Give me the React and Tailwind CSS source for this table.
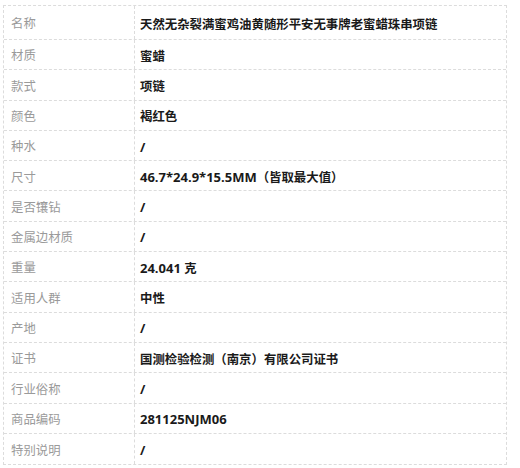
const rows = [
  ['名称', '天然无杂裂满蜜鸡油黄随形平安无事牌老蜜蜡珠串项链'],
  ['材质', '蜜蜡'],
  ['款式', '项链'],
  ['颜色', '褐红色'],
  ['种水', '/'],
  ['尺寸', '46.7*24.9*15.5MM（皆取最大值）'],
  ['是否镶钻', '/'],
  ['金属边材质', '/'],
  ['重量', '24.041 克'],
  ['适用人群', '中性'],
  ['产地', '/'],
  ['证书', '国测检验检测（南京）有限公司证书'],
  ['行业俗称', '/'],
  ['商品编码', '281125NJM06'],
  ['特别说明', '/'],
];

// CJK runs are set a little smaller than the latin ones
const Mixed = ({ text }) =>
  text.split(/([\u3000-\u9fff\uff00-\uffef]+)/).map((part, i) =>
    /[\u3000-\u9fff\uff00-\uffef]/.test(part) ? (
      <span key={i} className="text-[12.4px]">{part}</span>
    ) : (
      <span key={i} className="text-[13px]">{part}</span>
    )
  );

export default function App() {
  return (
    <div
      className="w-[520px] h-[468px] bg-white pt-[5px] pl-[3px]"
      style={{ fontFamily: '"Open Sans", "Noto Sans CJK SC", sans-serif' }}
    >
      <div className="w-[504px] border border-dashed border-[#dcdcdc]">
        {rows.map(([label, value], i) => (
          <div
            key={label}
            className={
              'flex ' +
              (i === 0 ? 'h-[34px] ' : 'h-[30.3px] ') +
              (i < rows.length - 1 ? 'border-b border-dashed border-[#dcdcdc]' : '')
            }
          >
            <div className="w-[131px] shrink-0 flex items-center pl-[7px] pt-[4px] text-[12.4px] text-[#9a9a9a] border-r border-dashed border-[#dcdcdc]">
              {label}
            </div>
            <div className="flex-1 flex items-center pl-[5px] font-bold text-[#1a1a1a]">
              <span>
                <Mixed text={value} />
              </span>
            </div>
          </div>
        ))}
      </div>
    </div>
  );
}
